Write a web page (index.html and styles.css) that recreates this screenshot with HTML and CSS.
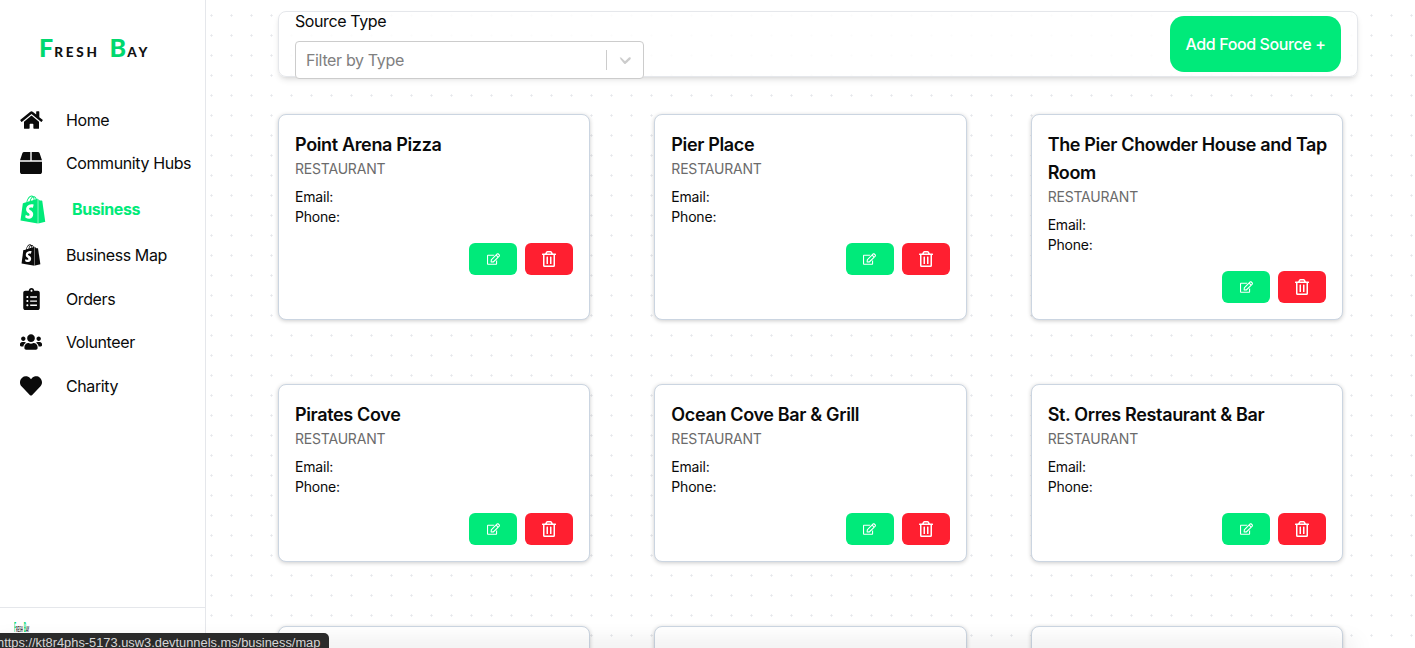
FILE: index.html
```html
<!DOCTYPE html>
<html lang="en">
<head>
<meta charset="utf-8">
<title>Fresh Bay</title>
<link rel="stylesheet" href="styles.css">
</head>
<body>
<svg class="defs" aria-hidden="true">
  <symbol id="i-home" viewBox="0 0 576 512"><path d="M280.37 148.26L96 300.11V464a16 16 0 0 0 16 16l112.06-.29a16 16 0 0 0 15.92-16V368a16 16 0 0 1 16-16h64a16 16 0 0 1 16 16v95.64a16 16 0 0 0 16 16.05L464 480a16 16 0 0 0 16-16V300L295.67 148.26a12.19 12.19 0 0 0-15.3 0zM571.6 251.47L488 182.56V44.05a12 12 0 0 0-12-12h-56a12 12 0 0 0-12 12v72.61L318.47 43a48 48 0 0 0-61 0L4.34 251.47a12 12 0 0 0-1.6 16.9l25.5 31A12 12 0 0 0 45.15 301l235.22-193.74a12.19 12.19 0 0 1 15.3 0L530.9 301a12 12 0 0 0 16.9-1.6l25.5-31a12 12 0 0 0-1.7-16.93z"/></symbol>
  <symbol id="i-box" viewBox="0 0 512 512"><path d="M509.5 184.6L458.9 32.8C452.4 13.2 434.1 0 413.4 0H272v192h238.7c-.4-2.5-.4-5-1.2-7.4zM240 0H98.6c-20.7 0-39 13.2-45.5 32.8L2.5 184.6c-.8 2.4-.8 4.9-1.2 7.4H240V0zM0 224v240c0 26.5 21.5 48 48 48h416c26.5 0 48-21.5 48-48V224H0z"/></symbol>
  <symbol id="i-shopify" viewBox="0 0 448 512"><path d="M388.32,104.1a4.66,4.66,0,0,0-4.4-4c-2,0-37.23-.8-37.23-.8s-21.61-20.82-29.62-28.83V503.2L442.76,472S388.72,106.5,388.32,104.1ZM288.65,70.47a116.67,116.67,0,0,0-7.21-17.61C271,32.85,255.42,22,237,22a15,15,0,0,0-4,.4c-.4-.8-1.2-1.2-1.6-2C223.4,11.63,213,7.63,200.58,8c-24,.8-48,18-67.25,48.83-13.61,21.62-24,48.84-26.82,70.06-27.62,8.4-46.83,14.41-47.23,14.81-14,4.4-14.41,4.8-16,18-1.2,10-38,291.82-38,291.82L307.86,504V65.67a41.66,41.66,0,0,0-4.4.4S297.86,67.67,288.65,70.47ZM233.41,87.69c-16,4.8-33.63,10.4-50.84,15.61,4.8-18.82,14.41-37.63,25.62-50,4.4-4.4,10.41-9.61,17.21-12.81C232.21,54.86,233.81,74.48,233.41,87.69ZM200.58,24.44A27.49,27.49,0,0,1,215,28c-6.4,3.2-12.81,8.41-18.81,14.41-15.21,16.42-26.82,42-31.62,66.45-14.42,4.41-28.83,8.81-42,12.81C131.33,83.28,163.75,25.24,200.58,24.44ZM154.15,244.61c1.6,25.61,69.25,31.22,73.25,91.66,2.8,47.64-25.22,80.06-65.65,82.47-48.83,3.2-75.65-25.62-75.65-25.62l10.4-44s26.82,20.42,48.44,18.82c14-.8,19.22-12.41,18.81-20.42-2-33.62-57.24-31.62-60.84-86.86-3.2-46.44,27.22-93.27,94.47-97.68,26-1.6,39.23,4.81,39.23,4.81L221.4,225.39s-17.21-8-37.63-6.4C154.15,221,153.75,239.8,154.15,244.61ZM249.42,82.88c0-12-1.6-29.22-7.21-43.63,18.42,3.6,27.22,24,31.23,36.43Q262.63,78.68,249.42,82.88Z"/></symbol>
  <symbol id="i-clip" viewBox="0 0 384 512"><path d="M336 64h-80c0-35.3-28.7-64-64-64s-64 28.7-64 64H48C21.5 64 0 85.5 0 112v352c0 26.5 21.5 48 48 48h288c26.5 0 48-21.5 48-48V112c0-26.5-21.5-48-48-48zM96 424c-13.3 0-24-10.7-24-24s10.7-24 24-24 24 10.7 24 24-10.7 24-24 24zm0-96c-13.3 0-24-10.7-24-24s10.7-24 24-24 24 10.7 24 24-10.7 24-24 24zm0-96c-13.3 0-24-10.7-24-24s10.7-24 24-24 24 10.7 24 24-10.7 24-24 24zm96-192c13.3 0 24 10.7 24 24s-10.7 24-24 24-24-10.7-24-24 10.7-24 24-24zm128 368c0 4.4-3.6 8-8 8H168c-4.4 0-8-3.6-8-8v-16c0-4.4 3.6-8 8-8h144c4.4 0 8 3.6 8 8v16zm0-96c0 4.4-3.6 8-8 8H168c-4.4 0-8-3.6-8-8v-16c0-4.4 3.6-8 8-8h144c4.4 0 8 3.6 8 8v16zm0-96c0 4.4-3.6 8-8 8H168c-4.4 0-8-3.6-8-8v-16c0-4.4 3.6-8 8-8h144c4.4 0 8 3.6 8 8v16z"/></symbol>
  <symbol id="i-users" viewBox="0 0 640 512"><path d="M96 224c35.3 0 64-28.7 64-64s-28.7-64-64-64-64 28.7-64 64 28.7 64 64 64zm448 0c35.3 0 64-28.7 64-64s-28.7-64-64-64-64 28.7-64 64 28.7 64 64 64zm32 32h-64c-17.6 0-33.5 7.1-45.1 18.6 40.3 22.1 68.9 62 75.1 109.4h66c17.7 0 32-14.3 32-32v-32c0-35.3-28.7-64-64-64zm-256 0c61.9 0 112-50.1 112-112S381.9 32 320 32 208 82.1 208 144s50.1 112 112 112zm76.8 32h-8.3c-20.8 10-43.9 16-68.5 16s-47.6-6-68.5-16h-8.3C179.6 288 128 339.6 128 403.2V432c0 26.5 21.5 48 48 48h288c26.5 0 48-21.5 48-48v-28.8c0-63.6-51.6-115.2-115.2-115.2zm-223.7-13.4C161.5 263.1 145.6 256 128 256H64c-35.3 0-64 28.7-64 64v32c0 17.7 14.3 32 32 32h65.9c6.3-47.4 34.9-87.3 75.2-109.4z"/></symbol>
  <symbol id="i-heart" viewBox="0 0 512 512"><path d="M462.3 62.6C407.5 15.9 326 24.3 275.7 76.2L256 96.5l-19.7-20.3C186.1 24.3 104.5 15.9 49.7 62.6c-62.8 53.6-66.1 149.8-9.9 207.9l193.5 199.8c12.5 12.9 32.8 12.9 45.3 0l193.5-199.8c56.3-58.1 53-154.3-9.8-207.9z"/></symbol>
  <symbol id="i-edit" viewBox="0 0 576 512"><path d="M402.3 344.9l32-32c5-5 13.7-1.5 13.7 5.7V464c0 26.5-21.5 48-48 48H48c-26.5 0-48-21.5-48-48V112c0-26.5 21.5-48 48-48h273.5c7.1 0 10.7 8.6 5.7 13.7l-32 32c-1.5 1.5-3.5 2.3-5.7 2.3H48v352h352V350.5c0-2.1.8-4.1 2.3-5.6zm156.6-201.8L296.3 405.7l-90.4 10c-26.2 2.9-48.5-19.2-45.6-45.6l10-90.4L432.9 17.1c22.9-22.9 59.9-22.9 82.7 0l43.2 43.2c22.9 22.9 22.9 60 .1 82.8zM460.1 174L402 115.9 216.2 301.8l-7.3 65.3 65.3-7.3L460.1 174zm64.8-79.7l-43.2-43.2c-4.1-4.1-10.8-4.1-14.8 0L436 82l58.1 58.1 30.9-30.9c4-4.2 4-10.8-.1-14.9z"/></symbol>
  <symbol id="i-trash" viewBox="0 0 448 512"><path d="M268 416h24a12 12 0 0 0 12-12V188a12 12 0 0 0-12-12h-24a12 12 0 0 0-12 12v216a12 12 0 0 0 12 12zM432 80h-82.41l-34-56.7A48 48 0 0 0 274.41 0H173.59a48 48 0 0 0-41.16 23.3L98.41 80H16A16 16 0 0 0 0 96v16a16 16 0 0 0 16 16h16v336a48 48 0 0 0 48 48h288a48 48 0 0 0 48-48V128h16a16 16 0 0 0 16-16V96a16 16 0 0 0-16-16zM171.84 50.91A6 6 0 0 1 177 48h94a6 6 0 0 1 5.15 2.91L293.61 80H154.39zM368 464H80V128h288zm-212-48h24a12 12 0 0 0 12-12V188a12 12 0 0 0-12-12h-24a12 12 0 0 0-12 12v216a12 12 0 0 0 12 12z"/></symbol>
</svg>
<div class="app">
  <aside class="sidebar">
    <div class="logo"><span class="logo-cap">F</span>resh <span class="logo-cap">B</span>ay</div>
    <nav class="nav">
      <a class="nav-item"><span class="nav-icon"><svg class="ico-home"><use href="#i-home"/></svg></span>Home</a>
      <a class="nav-item"><span class="nav-icon"><svg class="ico-box"><use href="#i-box"/></svg></span>Community Hubs</a>
      <a class="nav-item nav-active"><span class="nav-icon"><svg class="ico-shop-lg"><use href="#i-shopify"/></svg></span>Business</a>
      <a class="nav-item"><span class="nav-icon"><svg class="ico-shop"><use href="#i-shopify"/></svg></span>Business Map</a>
      <a class="nav-item"><span class="nav-icon"><svg class="ico-clip"><use href="#i-clip"/></svg></span>Orders</a>
      <a class="nav-item"><span class="nav-icon"><svg class="ico-users"><use href="#i-users"/></svg></span>Volunteer</a>
      <a class="nav-item"><span class="nav-icon"><svg class="ico-heart"><use href="#i-heart"/></svg></span>Charity</a>
    </nav>
    <div class="side-foot"><div class="mini-logo"><span class="mini-cap">F</span>resh <span class="mini-cap">B</span>ay</div></div>
  </aside>
  <main class="main">
    <section class="filter-bar">
      <div class="filter">
        <label class="filter-label">Source Type</label>
        <div class="select">
          <span class="select-ph">Filter by Type</span>
          <span class="select-sep"></span>
          <svg class="select-chev" viewBox="0 0 20 20"><path d="M4.516 7.548c.436-.446 1.043-.481 1.576 0L10 11.295l3.908-3.747c.533-.481 1.141-.446 1.574 0 .436.445.408 1.197 0 1.615-.406.418-4.695 4.502-4.695 4.502a1.095 1.095 0 0 1-1.576 0S5.922 9.581 5.516 9.163c-.409-.418-.436-1.17 0-1.615z"/></svg>
        </div>
      </div>
      <button class="add-btn">Add Food Source +</button>
    </section>
    <section class="grid">
      <article class="card"><h3 class="card-title">Point Arena Pizza</h3><p class="card-type">RESTAURANT</p><p class="card-line card-email">Email:</p><p class="card-line">Phone:</p><div class="card-actions"><button class="act act-edit"><svg class="ico-edit"><use href="#i-edit"/></svg></button><button class="act act-del"><svg class="ico-trash"><use href="#i-trash"/></svg></button></div></article>
      <article class="card"><h3 class="card-title">Pier Place</h3><p class="card-type">RESTAURANT</p><p class="card-line card-email">Email:</p><p class="card-line">Phone:</p><div class="card-actions"><button class="act act-edit"><svg class="ico-edit"><use href="#i-edit"/></svg></button><button class="act act-del"><svg class="ico-trash"><use href="#i-trash"/></svg></button></div></article>
      <article class="card"><h3 class="card-title">The Pier Chowder House and Tap Room</h3><p class="card-type">RESTAURANT</p><p class="card-line card-email">Email:</p><p class="card-line">Phone:</p><div class="card-actions"><button class="act act-edit"><svg class="ico-edit"><use href="#i-edit"/></svg></button><button class="act act-del"><svg class="ico-trash"><use href="#i-trash"/></svg></button></div></article>
      <article class="card"><h3 class="card-title">Pirates Cove</h3><p class="card-type">RESTAURANT</p><p class="card-line card-email">Email:</p><p class="card-line">Phone:</p><div class="card-actions"><button class="act act-edit"><svg class="ico-edit"><use href="#i-edit"/></svg></button><button class="act act-del"><svg class="ico-trash"><use href="#i-trash"/></svg></button></div></article>
      <article class="card"><h3 class="card-title">Ocean Cove Bar &amp; Grill</h3><p class="card-type">RESTAURANT</p><p class="card-line card-email">Email:</p><p class="card-line">Phone:</p><div class="card-actions"><button class="act act-edit"><svg class="ico-edit"><use href="#i-edit"/></svg></button><button class="act act-del"><svg class="ico-trash"><use href="#i-trash"/></svg></button></div></article>
      <article class="card"><h3 class="card-title">St. Orres Restaurant &amp; Bar</h3><p class="card-type">RESTAURANT</p><p class="card-line card-email">Email:</p><p class="card-line">Phone:</p><div class="card-actions"><button class="act act-edit"><svg class="ico-edit"><use href="#i-edit"/></svg></button><button class="act act-del"><svg class="ico-trash"><use href="#i-trash"/></svg></button></div></article>
      <article class="card"></article>
      <article class="card"></article>
      <article class="card"></article>
    </section>
  </main>
</div>
<div class="bottom-fade"></div>
<div class="status-link">https://kt8r4phs-5173.usw3.devtunnels.ms/business/map</div>
</body>
</html>
```
FILE: styles.css
```css
* { box-sizing: border-box; }
html, body { margin: 0; height: 100%; overflow: hidden; }
body { font-family: Inter, "Liberation Sans", sans-serif; color: #0a0a0a; background: #fff; }
.defs { display: none; }
.app { display: flex; height: 648px; overflow: hidden; }

.sidebar { width: 206px; flex: none; border-right: 1px solid #e5e7eb; display: flex; flex-direction: column; background: #fff; }
.logo { height: 98px; padding: 35px 0 0 39px; font-family: Lato, sans-serif; font-weight: 900; font-size: 13.5px; line-height: 24px; letter-spacing: 2.7px; word-spacing: 4px; text-transform: uppercase; color: #111; white-space: pre; }
.logo-cap { font-size: 25px; color: #00d86f; font-weight: 900; letter-spacing: 1.2px; }
.nav { display: flex; flex-direction: column; flex: 1; }
.nav-item { display: flex; align-items: center; height: 42px; padding-left: 20px; font-size: 16px; letter-spacing: -.4px; color: #0a0a0a; }
.nav-item:nth-child(1) { height: 44px; }
.nav-item:nth-child(3) { height: 50px; }
.nav-item:nth-child(5) { height: 46px; }
.nav-item:nth-child(6) { height: 40px; }
.nav-item:nth-child(7) { height: 48px; }
.nav-active { color: #00ea79; font-weight: 700; }
.nav-icon { width: 46px; flex: none; display: flex; align-items: center; }
.nav-active .nav-icon { width: 52px; }
.nav-icon svg { display: block; fill: currentColor; }
.ico-home { width: 23px; height: 20px; }
.ico-box { width: 22px; height: 22px; }
.ico-shop-lg { width: 26px; height: 29px; }
.ico-shop { width: 22px; height: 22px; }
.ico-clip { width: 17px; height: 22px; margin-left: 3px; }
.ico-users { width: 22px; height: 18px; }
.ico-heart { width: 22px; height: 22px; }
.side-foot { height: 41px; border-top: 1px solid #e5e7eb; width: 205px; padding: 11px 0 0 14px; overflow: hidden; }
.mini-logo { font-family: Lato, sans-serif; font-size: 8px; font-weight: 900; line-height: 16px; letter-spacing: 1px; text-transform: uppercase; white-space: pre; transform: scaleX(.27); transform-origin: left center; }
.mini-cap { font-size: 13px; color: #00d86f; }

.main { position: relative; flex: 1; min-width: 0; padding: 11px 57px 0 72px; background-color: #fff; background-image: radial-gradient(circle at 5.5px 5.5px, #e6e8ec 0.9px, transparent 1.3px); background-size: 20px 20px; background-position: 0 10px; }
.filter-bar { height: 66px; border: 1px solid #e5e7eb; border-radius: 8px; background: rgba(255,255,255,.85); box-shadow: 0 4px 6px -1px rgba(0,0,0,.1), 0 2px 4px -2px rgba(0,0,0,.1); display: flex; justify-content: space-between; padding: 0 16px; position: relative; }
.filter { width: 349px; }
.filter-label { display: block; font-size: 16px; line-height: 18px; letter-spacing: -.4px; color: #0a0a0a; }
.select { display: flex; align-items: center; width: 349px; height: 38px; margin-top: 11px; border: 1px solid #ccc; border-radius: 4px; background: #fff; padding-left: 10px; position: relative; }
.select-ph { flex: 1; font-size: 16px; letter-spacing: -.35px; color: #808080; }
.select-sep { width: 1px; height: 20px; background: #ccc; }
.select-chev { width: 20px; height: 20px; margin: 0 8px; fill: #ccc; }
.add-btn { border: 0; border-radius: 14px; background: #00ea7a; color: #fff; font-family: inherit; font-size: 16px; font-weight: 500; letter-spacing: -.4px; width: 171px; height: 56px; margin: 4px 0 0; padding: 0; }

.grid { display: grid; grid-template-columns: repeat(3, 1fr); gap: 64px; margin-top: 37px; width: 1065px; }
.card { min-height: 178px; border: 1px solid #cbd5e1; border-radius: 8px; background: #fff; padding: 16px; box-shadow: 0 1px 4px rgba(0,0,0,.2); display: flex; flex-direction: column; }
.card-title { margin: 0 -8px 0 0; font-size: 18px; line-height: 28px; font-weight: 600; letter-spacing: -.35px; color: #0a0a0a; }
.card-type { margin: 0; font-size: 14px; line-height: 20px; letter-spacing: -.2px; color: #6b6b6b; }
.card-line { margin: 0; font-size: 14px; line-height: 20px; letter-spacing: -.2px; color: #0a0a0a; }
.card-email { margin-top: 8px; }
.card-actions { display: flex; justify-content: flex-end; gap: 8px; margin-top: 16px; }
.act { width: 48px; height: 32px; border: 0; border-radius: 6px; padding: 0; display: flex; align-items: center; justify-content: center; color: #fff; }
.act svg { display: block; fill: currentColor; }
.act-edit { background: #00ea7a; }
.act-del { background: #ff1f30; }
.ico-edit { width: 13px; height: 12px; }
.ico-trash { width: 14px; height: 16px; }

.bottom-fade { position: fixed; left: 0; bottom: -2px; width: 1350px; height: 2px; box-shadow: 0 0 22px 4px rgba(0,0,0,.13); }
.status-link { position: fixed; left: 0; bottom: 0; width: 329px; height: 15px; background: #2b2b2b; border-top-right-radius: 5px; color: #d6d6d6; font-family: "Liberation Sans", sans-serif; font-size: 12.85px; line-height: 20px; overflow: hidden; white-space: nowrap; text-indent: -3px; }
```
